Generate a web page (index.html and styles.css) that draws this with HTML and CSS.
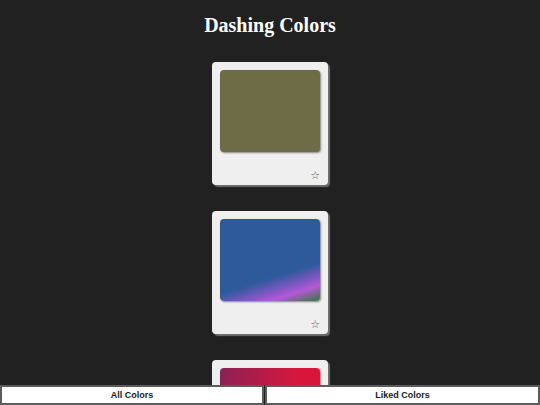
FILE: index.html
```html
<!DOCTYPE html>
<html>
<head>
<meta charset="utf-8">
<link rel="stylesheet" href="styles.css">
</head>
<body>
<h1 class="title">Dashing Colors</h1>
<main class="cards">
  <div class="card">
    <div class="swatch swatch-olive"></div>
    <div class="card-foot"><span class="star">☆</span></div>
  </div>
  <div class="card">
    <div class="swatch swatch-blue"></div>
    <div class="card-foot"><span class="star">☆</span></div>
  </div>
  <div class="card">
    <div class="swatch swatch-red"></div>
    <div class="card-foot"><span class="star">☆</span></div>
  </div>
</main>
<nav class="tabs">
  <button class="tab">All Colors</button>
  <button class="tab">Liked Colors</button>
</nav>
</body>
</html>
```
FILE: styles.css
```css
html, body {
  margin: 0;
  padding: 0;
  background: #212121;
}
body {
  height: 405px;
  overflow: hidden;
}
.title {
  margin: 14px 0 0;
  font-family: "Liberation Serif", "Times New Roman", serif;
  font-weight: bold;
  font-size: 20px;
  line-height: 23px;
  color: #ffffff;
  text-align: center;
}
.cards {
  display: flex;
  flex-direction: column;
  align-items: center;
  gap: 26px;
  margin-top: 25px;
  height: 323px;
  overflow: hidden;
}
.card {
  flex: none;
  box-sizing: border-box;
  width: 116px;
  height: 123px;
  padding: 8px;
  background: #efefef;
  border-radius: 4px;
  box-shadow: 2px 2px 1px #6e6e6e;
  display: flex;
  flex-direction: column;
}
.swatch {
  height: 82px;
  border-radius: 4px;
  box-shadow: 1px 1px 2px rgba(0,0,0,0.45);
}
.swatch-olive {
  background: #6e6b47;
}
.swatch-blue {
  background: linear-gradient(162deg, #2e5a9c 0%, #2e5a9c 66%, #8a57c8 80%, #b35ad2 86%, #2f7a3c 100%);
}
.swatch-red {
  background: linear-gradient(100deg, #8a2255 0%, #d8163c 70%);
}
.card-foot {
  flex: 1;
  display: flex;
  justify-content: flex-end;
  align-items: flex-end;
}
.star {
  font-family: "DejaVu Sans", sans-serif;
  font-size: 11px;
  line-height: 11px;
  color: #5e5e5e;
  margin: 0 0 -4px 0;
}
.tabs {
  position: fixed;
  left: 0;
  right: 0;
  bottom: 0;
  display: grid;
  grid-template-columns: 264px 1fr;
  column-gap: 1px;
  background: #212121;
}
.tab {
  box-sizing: border-box;
  height: 20px;
  margin: 0;
  padding: 0;
  border: 2px solid #5c5c5c;
  background: #ffffff;
  font-family: "Liberation Sans", Arial, sans-serif;
  font-weight: bold;
  font-size: 9px;
  color: #222222;
  text-align: center;
}
```
